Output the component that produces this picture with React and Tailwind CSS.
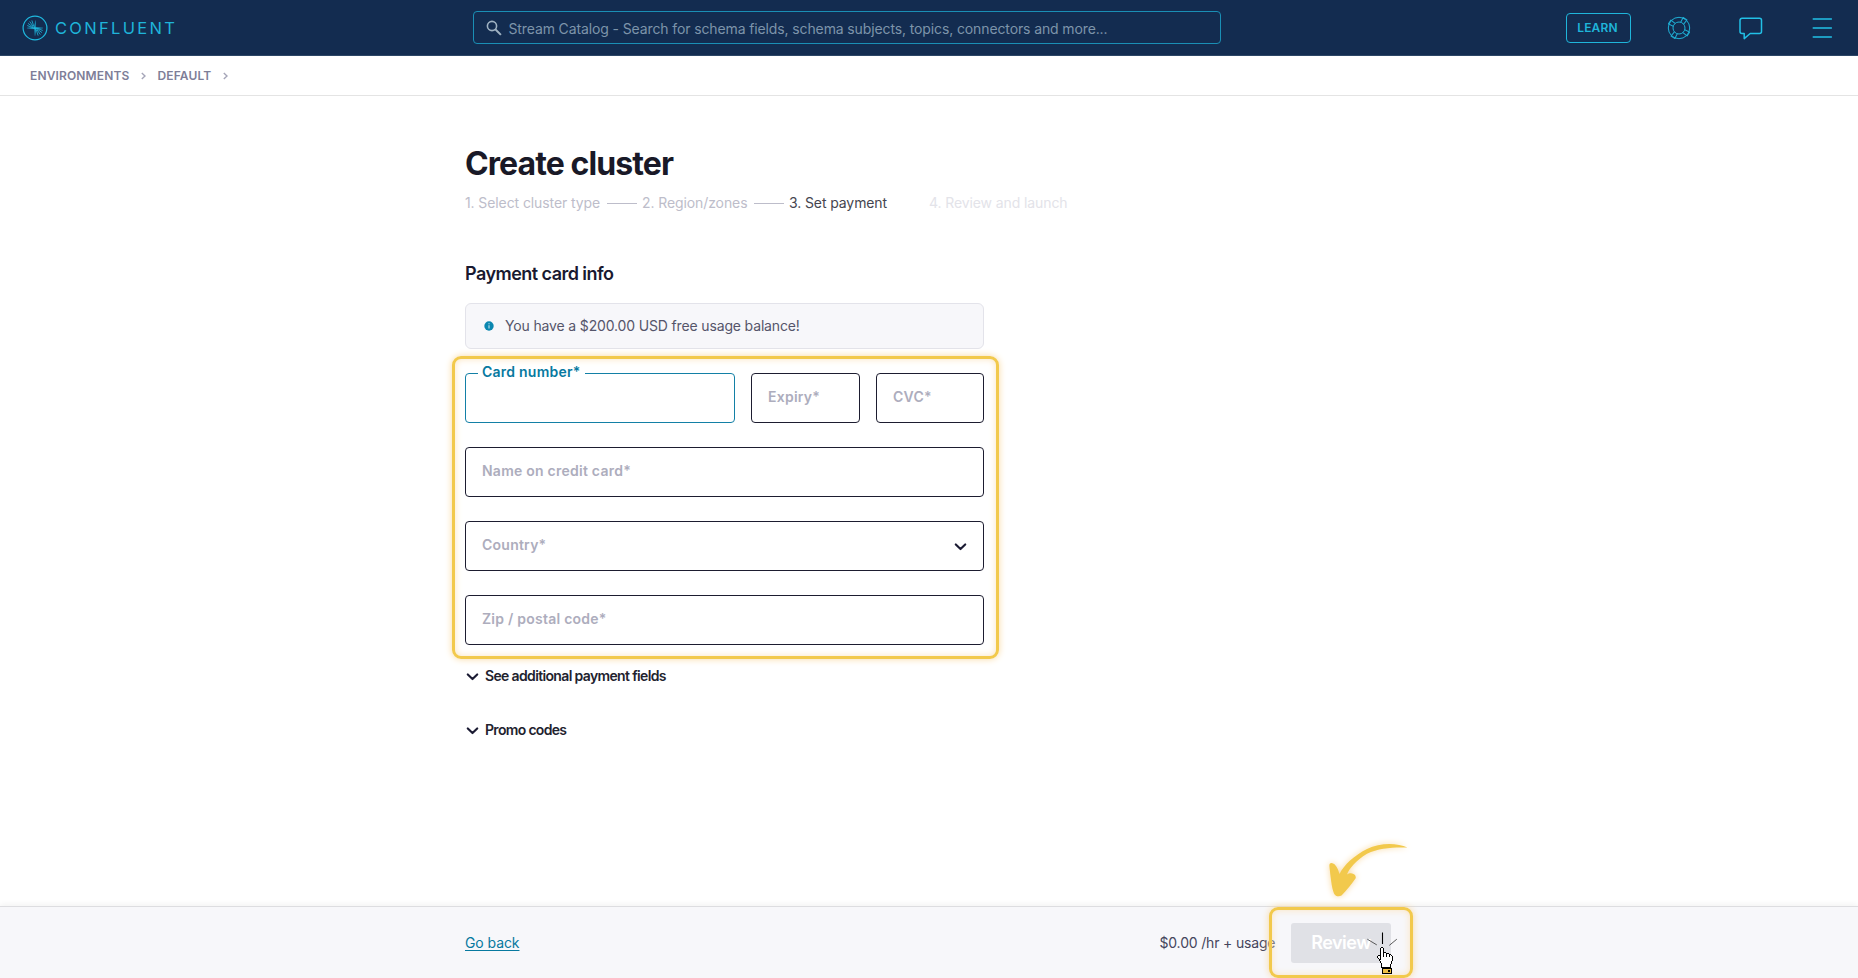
const Chevron = ({ className }) => (
  <svg className={className} width="13" height="8" viewBox="0 0 13 8" fill="none" stroke="#1b1b33" strokeWidth="2.1" strokeLinecap="round" strokeLinejoin="round">
    <path d="M1.8 1.4 6.5 6.1l4.7-4.7" />
  </svg>
);

const Crumb = ({ label }) => (
  <div className="flex items-center">
    <span className="tracking-[0.14px]">{label}</span>
    <svg className="ml-3 mr-[11px] mt-px" width="5" height="8" viewBox="0 0 5 8" fill="none" stroke="#a5a5b8" strokeWidth="1.4">
      <path d="M.8 1 4 4 .8 7" />
    </svg>
  </div>
);

const Logo = () => (
  <svg width="26" height="26" viewBox="0 0 26 26" fill="none" stroke="#1fb8de">
    <circle cx="13" cy="13" r="11.9" strokeWidth="1.2" />
    <g strokeWidth=".8" strokeLinecap="round">
      <path d="M11.7 11 10 5.8M11 11.3 7.9 6.8M10.6 11.8 6.3 8.6M10.4 12.4 5.6 10.7" />
      <path d="M14.3 15l1.7 5.2M15 14.7l3.1 4.5M15.4 14.2l4.3 3.2M15.6 13.6l4.8 1.7" />
    </g>
    <path d="M13.5 5.5v6.8l7.6.7-7.2.9-.9 6.9-.5-6.8-7.6-.9 7.3-.8z" fill="#1fb8de" strokeWidth=".2" />
  </svg>
);

const Strap = ({ transform }) => <path d="M10.3 6.2 9.7.9h4.6L13.7 6.2" transform={transform} />;

const Lifebuoy = () => (
  <svg width="24" height="24" viewBox="0 0 24 24" fill="none" stroke="#1fb0d6" strokeWidth="1" strokeLinejoin="round">
    <circle cx="12" cy="12" r="10.7" />
    <circle cx="12" cy="12" r="6" />
    <Strap transform="rotate(33 12 12)" />
    <Strap transform="rotate(123 12 12)" />
    <Strap transform="rotate(213 12 12)" />
    <Strap transform="rotate(303 12 12)" />
  </svg>
);

const Field = ({ label, className = "w-full", children }) => (
  <div className={"flex h-[50px] items-center justify-between rounded border border-[#1d1d30] px-4 " + className}>
    <span className="-mt-[3px] text-sm font-semibold tracking-[0.24px] text-[#adadbd]">{label}</span>
    {children}
  </div>
);

// Pixel outline of the pointing hand, one character per pixel.
const HAND = [
  "....XX...........",
  "...X..X..........",
  "...X..X..........",
  "...X..X..........",
  "...X..X..........",
  "...X..XXX........",
  "...X..X..XXX.....",
  "...X..X..X..XX...",
  ".XXX..X..X..X.X..",
  "X..X..X..X..X..X.",
  "X..X...........X.",
  ".X.X...........X.",
  "..XX...........X.",
  "..X............X.",
  "...X..........X..",
  "...X..........X..",
  "....X.........X..",
  "....X........X...",
];

const Hand = () => (
  <svg width="18" height="27" viewBox="0 0 18 27" shapeRendering="crispEdges">
    <path d="M5 1h1v4l3 1 3 1 3 2v6l-2 5H6l-3-5-2-4V9h3V1z" fill="#fff" />
    {HAND.flatMap((row, y) =>
      [...row].map((c, x) => (c === "X" ? <rect key={x + "-" + y} x={x} y={y} width="1" height="1" fill="#000" /> : null))
    )}
    <path d="M5 18h8v3H5z" fill="#fff" />
    <path d="M4 18h1v3H4zM13 18h1v3h-1zM5 20h9v7H5z" fill="#000" />
    <path d="M6 22h8v4H6z" fill="#eebf45" />
    <path d="M14 21h1v6h-1zM11 23h2v2h-2z" fill="#000" />
  </svg>
);

export default function App() {
  return (
    <div className="relative flex h-[978px] w-[1858px] flex-col overflow-hidden bg-white font-['Inter',sans-serif] text-sm text-[#4d4d63]">
      <header className="flex h-14 shrink-0 items-center border-b border-[#2c4666] bg-[#132c50] pl-[21.5px] pr-[25.5px]">
        <div className="flex w-[451.5px] items-center pt-px">
          <Logo />
          <span className="ml-[7.5px] mt-0.5 text-[16.5px] tracking-[2.3px] text-[#1fb4da]">CONFLUENT</span>
        </div>
        <div className="flex h-[33px] w-[748px] items-center rounded border border-[#1a8fb5] pl-3 pt-px">
          <svg width="17" height="17" viewBox="0 0 17 17" fill="none" stroke="#9fb2c2" strokeWidth="1.6">
            <circle cx="6" cy="6" r="4.6" />
            <path d="m9.3 9.3 5.6 5.6" strokeWidth="2" />
          </svg>
          <span className="ml-[5.5px] mt-0.5 tracking-[-0.12px] text-[#7d94aa]">
            Stream Catalog - Search for schema fields, schema subjects, topics, connectors and more...
          </span>
        </div>
        <div className="ml-auto flex items-center">
          <div className="flex h-[30px] w-[65px] items-center justify-center rounded border border-[#1fb5da] pr-px text-xs font-semibold tracking-[0.15px] text-[#1fb5da]">LEARN</div>
          <div className="ml-9 flex"><Lifebuoy /></div>
          <svg className="ml-12 mt-0.5" width="24" height="24" viewBox="0 0 24 24" fill="none" stroke="#22c0e6" strokeWidth="1.5" strokeLinejoin="round">
            <path d="M3 1.3h17.5a2 2 0 0 1 2 2v11.2a2 2 0 0 1-2 2h-9.3L5.2 21.6v-5.1H3a2 2 0 0 1-2-2V3.3a2 2 0 0 1 2-2z" />
          </svg>
          <svg className="ml-[49px]" width="21" height="20" viewBox="0 0 21 20" stroke="#22c0e6" strokeWidth="1.4" strokeLinecap="round">
            <path d="M1.2 1h18.2M1.2 10h18.2M1.2 19h18.2" />
          </svg>
        </div>
      </header>

      <nav className="flex h-10 shrink-0 items-center border-b border-[#e4e4e4] pl-[30px] text-xs font-semibold text-[#7e7e98]">
        <Crumb label="ENVIRONMENTS" />
        <Crumb label="DEFAULT" />
      </nav>

      <main className="ml-[465px] flex flex-1 flex-col pt-12">
        <h1 className="text-[32px]/10 font-bold tracking-[-0.9px] text-[#191927]">Create cluster</h1>
        <ol className="mt-[9px] flex h-5 items-center tracking-[-0.1px] text-[#bdbdca]">
          <li>1. Select cluster type</li>
          <li className="ml-[7px] h-px w-[30px] bg-[#bdbdca]" />
          <li className="ml-[5px]">2. Region/zones</li>
          <li className="ml-[6.5px] h-px w-[30px] bg-[#bdbdca]" />
          <li className="ml-[5px] text-[#45454f]">3. Set payment</li>
          <li className="ml-[42px] text-[#e3e3e9]">4. Review and launch</li>
        </ol>
        <h2 className="mt-[49px] text-lg/6 font-semibold tracking-[-0.54px] text-[#191930]">Payment card info</h2>
        <div className="mt-[17px] flex h-[46px] w-[519px] items-center rounded-md border border-[#e3e3ea] bg-[#f7f7fa] pl-[18px]">
          <svg width="10" height="10" viewBox="0 0 10 10">
            <circle cx="5" cy="5" r="4.7" fill="#0b87b0" />
            <path d="M4.5 2.3h1v1h-1zM4.5 4.2h1v3.4h-1z" fill="#d8edf4" />
          </svg>
          <span className="ml-[11px] tracking-[-0.15px] text-[#55556a]">You have a $200.00 USD free usage balance!</span>
        </div>

        <form className="mt-6 flex w-[519px] flex-col gap-6">
          <div className="flex">
            <div className="relative h-[50px] w-[270px] rounded border border-[#1380a6]">
              <span className="absolute -top-[12px] left-3 bg-white px-1 text-sm font-semibold tracking-[0.24px] text-[#07799f]">Card number*</span>
            </div>
            <Field label="Expiry*" className="ml-4 w-[109px]" />
            <Field label="CVC*" className="ml-4 w-[108px]" />
          </div>
          <Field label="Name on credit card*" />
          <Field label="Country*">
            <Chevron className="mt-px" />
          </Field>
          <Field label="Zip / postal code*" />
        </form>

        <div className="mt-[21px] flex items-center text-sm/5 font-semibold tracking-[-0.65px] text-[#22222e]">
          <Chevron className="ml-px mr-1.5 mt-px" />
          See additional payment fields
        </div>
        <div className="mt-[34px] flex items-center text-sm/5 font-semibold tracking-[-0.68px] text-[#22222e]">
          <Chevron className="ml-px mr-1.5 mt-px" />
          Promo codes
        </div>
      </main>

      <footer className="flex h-[72px] shrink-0 items-center border-t border-[#dddde0] bg-[#f7f7fa] pl-[465px] shadow-[0_-2px_6px_rgba(0,0,0,0.05)]">
        <a className="w-[694.5px] tracking-[-0.08px] text-[#07799f] underline underline-offset-2">Go back</a>
        <span className="w-[131.5px] tracking-[-0.17px] text-[#45455c]">$0.00 /hr + usage</span>
        <button className="flex h-10 w-[100px] items-center justify-center rounded-[3px] bg-[#e0e1e6] pt-px text-lg font-semibold tracking-[-0.5px] text-white">Review</button>
      </footer>

      <div className="absolute left-[452px] top-[356px] h-[303px] w-[547px] rounded-[9px] border-[3px] border-[#f2c94c] shadow-[0_0_7px_#f9d9a0,inset_0_0_7px_#fbe3bd]" />
      <div className="absolute left-[1269px] top-[907px] h-[71px] w-[144px] rounded-[9px] border-[3px] border-[#f2c94c] shadow-[0_0_7px_#f9d9a0,inset_0_0_7px_#fbe3bd]" />
      <svg className="absolute left-[1320px] top-[830px] drop-shadow-[0_0_3px_#f9d9a0]" width="100" height="80" viewBox="0 0 100 80" fill="#f2c94c">
        <path d="M87.4 17.6C77 12.8 60 12.7 47 19C34 25.5 24 35 19.5 44C18.5 40 16 33.5 11.5 33C9 33 9.3 35 9.6 38C10.5 46 11.5 57 14 63.5C15.5 66.5 19 67 21.5 65.5C27 60 31.5 54 35.5 48.5C36.5 46 34.5 43.5 31 43.3C29.5 43.3 28 43.8 27 44.5C29 39 36 30.5 47 23.8C59 17.9 73 17.2 87.4 17.6z" />
      </svg>
      <svg className="absolute left-[1365px] top-[930px]" width="34" height="18" viewBox="0 0 34 18" fill="none" stroke="#000">
        <path d="M17.5 2.5v11.5" strokeWidth="1.1" />
        <path d="m2.3 9.2 9.5 5.7M31.8 9.2l-7.5 6.2" stroke="#333" strokeWidth=".8" />
      </svg>
      <div className="absolute left-[1377px] top-[947px]">
        <Hand />
      </div>
    </div>
  );
}
